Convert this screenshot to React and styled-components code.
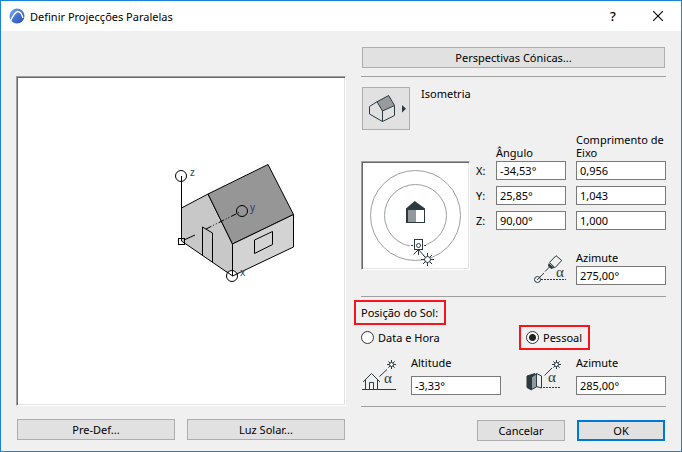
import React, { useState } from "react";
import styled, { createGlobalStyle, css } from "styled-components";

const ink = "#2b3940";

const GlobalStyle = createGlobalStyle`
  *, *::before, *::after { box-sizing: border-box; }
  body { margin: 0; background: #f0f0f0; }
  body, button, input {
    font-family: "Noto Sans", "Open Sans", sans-serif;
    font-size: 11px;
    line-height: 13px;
    color: #000;
  }
`;

const Dialog = styled.main`
  display: flex;
  flex-direction: column;
  min-height: 100vh;
  border: 1px solid #1883d7;
  background: #f0f0f0;
`;

const TitleBar = styled.header`
  display: flex;
  align-items: center;
  gap: 5px;
  height: 30px;
  padding: 0 15px 0 8px;
  background: #fff;
`;

const Title = styled.h1`
  flex: 1;
  margin: 0;
  font-size: 11px;
  font-weight: 400;
`;

const TitleButton = styled.button`
  display: grid;
  place-items: center;
  width: 16px;
  height: 20px;
  margin-left: 24px;
  padding: 0;
  border: 0;
  background: none;
  font-size: 13px;
  font-weight: 500;
`;

const Content = styled.div`
  flex: 1;
  display: grid;
  grid-template-columns: minmax(0, 330fr) minmax(305px, 305fr);
  column-gap: 15px;
  padding: 0 15px;
`;

const PreviewColumn = styled.section`
  display: flex;
  flex-direction: column;
  gap: 13px;
  padding: 45px 0 11px;
`;

const sunken = css`
  border: 1px solid;
  border-color: #a0a0a0 #fff #fff #a0a0a0;
  background: #fff;
  box-shadow: inset 1px 1px 0 #696969, inset -1px -1px 0 #e3e3e3;
  padding: 1px;
`;

const Preview = styled.div`
  ${sunken}
  flex: 1;
  display: grid;
  svg { width: 100%; height: 100%; }
`;

const PreviewActions = styled.div`
  display: grid;
  grid-template-columns: 1fr 1fr;
  gap: 12px;
  padding: 0 1px;
`;

const Button = styled.button`
  height: 21px;
  padding: 0 8px;
  border: ${(p) => (p.$primary ? "2px solid #0078d7" : "1px solid #adadad")};
  border-radius: 0;
  background: #e1e1e1;
`;

const Settings = styled.section`
  display: flex;
  flex-direction: column;
  padding: 16px 0 10px;
`;

const Rule = styled.hr`
  width: 100%;
  height: 1px;
  margin: 0;
  border: 0;
  background: #a0a0a0;
`;

const WideButton = styled(Button)`
  margin: 0 1px 8px;
`;

const ProjectionRow = styled.div`
  display: flex;
  gap: 11px;
  margin: 10px 0 3px 1px;
`;

const ProjectionButton = styled.button`
  display: grid;
  place-items: center;
  width: 48px;
  height: 43px;
  padding: 0;
  border: 1px solid #adadad;
  background: #e1e1e1;
`;

const Parameters = styled.div`
  display: flex;
  align-items: flex-start;
  gap: 6px;
`;

const Orbit = styled.div`
  ${sunken}
  display: grid;
  width: 109px;
  height: 109px;
  margin-top: 28px;
`;

const ParameterFields = styled.div`
  flex: 1;
  display: flex;
  flex-direction: column;
  gap: 21px;
  margin-bottom: 11px;
`;

const AxisTable = styled.div`
  display: grid;
  grid-template-columns: 10px minmax(0, 7fr) minmax(0, 9fr);
  gap: 6px 10px;
  align-items: center;
`;

const ColumnLabel = styled.span`
  align-self: end;
  margin-bottom: -4px;
`;

const TextBox = styled.input`
  width: 100%;
  min-width: 0;
  height: 19px;
  padding: 0 3px;
  border: 1px solid #7a7a7a;
  border-radius: 0;
  background: #fff;
`;

const IconField = styled.div`
  display: flex;
  align-items: flex-end;
  justify-content: ${(p) => (p.$end ? "flex-end" : "flex-start")};
  gap: ${(p) => (p.$tight ? "9px" : "15px")};
`;

const Field = styled.label`
  display: flex;
  flex-direction: column;
  gap: ${(p) => (p.$roomy ? "7px" : "2px")};
  width: 90px;
`;

const SunGrid = styled.div`
  display: grid;
  grid-template-columns: 165fr 140fr;
`;

const SunHeading = styled.h2`
  align-self: flex-start;
  margin: 9px 0 12px;
  font-size: 11px;
  font-weight: 400;
`;

/* Red frame laid over a label without taking room in the flow. */
const Highlight = styled.span`
  position: relative;
  display: inline-flex;
  &::after {
    content: "";
    position: absolute;
    inset: -6px -8px -6px -7px;
    border: 2px solid #f8141c;
    pointer-events: none;
  }
`;

const Option = styled.label`
  display: inline-flex;
  align-items: center;
  gap: 4px;
`;

const Radio = styled.input`
  appearance: none;
  width: 13px;
  height: 13px;
  margin: 0;
  border: 1px solid #333;
  border-radius: 50%;
  background: #fff;
  &:checked { background: radial-gradient(circle, #222 0 3px, #fff 4px); }
`;

const SunFields = styled(SunGrid)`
  margin: 10px 0 11px;
`;

const Footer = styled.footer`
  display: flex;
  justify-content: flex-end;
  gap: 12px;
  margin: auto 0 0;
  padding: 13px 1px 0 0;
`;

const FooterButton = styled(Button)`
  width: 88px;
`;

const Icon = styled.svg`
  display: block;
  flex: none;
  fill: none;
  stroke: ${ink};
  stroke-width: 1;
  text {
    fill: ${ink};
    stroke: none;
    font: 15px "Liberation Serif", serif;
  }
`;

function Sun({ x, y, r, reach }) {
  const d = reach * 0.7;
  const e = r * 0.7;
  return (
    <g>
      <circle cx={x} cy={y} r={r} fill="#fff" />
      <path
        d={`M${x - reach} ${y}H${x - r}M${x + r} ${y}H${x + reach}M${x} ${y - reach}V${y - r}M${x} ${y + r}V${y + reach}
        M${x - d} ${y - d}L${x - e} ${y - e}M${x + d} ${y - d}L${x + e} ${y - e}M${x - d} ${y + d}L${x - e} ${y + e}M${x + d} ${y + d}L${x + e} ${y + e}`}
      />
    </g>
  );
}

function AppLogo() {
  return (
    <svg width="16" height="16" viewBox="0 0 16 16" aria-hidden="true">
      <defs>
        <linearGradient id="logo" x1="0" y1="0" x2="1" y2="1">
          <stop offset="0" stopColor="#7fb0f0" />
          <stop offset="0.5" stopColor="#4474d4" />
          <stop offset="1" stopColor="#2a4fa8" />
        </linearGradient>
      </defs>
      <circle cx="8" cy="8" r="7.500" fill="url(#logo)" />
      <path d="M1.500 13C3.500 8.500 6 4 9 3.500C11.500 3.500 13 6.500 14 10" fill="none" stroke="#fff" strokeWidth="1.300" />
    </svg>
  );
}

function HousePreview() {
  return (
    <svg viewBox="18 78 326 326" fill="none" stroke="#000" strokeWidth="1" role="img" aria-label="Isometria">
      <path d="M181.500 208L208 194L232.500 244V276L181.500 241Z" fill="#c8c8c8" />
      <path d="M208 194L268 164.500L293.500 214.500L232.500 244Z" fill="#969696" />
      <path d="M232.500 244L293.500 214.500V247L232.500 276Z" fill="#d3d3d3" />
      <path d="M202.500 255.500V227L212.500 233V262.500" />
      <path d="M254.500 240L272.500 231.500V244.500L254.500 253.500Z" />
      <path d="M184 240L195 235" />
      <path d="M206 229L240 212" strokeDasharray="6 2 1 2 1 2" />
      <circle cx="242" cy="211" r="5.500" />
      <path d="M181.500 181V238" />
      <circle cx="181" cy="176" r="5.500" fill="#fff" />
      <path d="M181.500 176V181" />
      <rect x="178.500" y="238.500" width="6" height="6" />
      <circle cx="232" cy="276" r="5.500" fill="#fff" />
      <path d="M226.500 271.500L232.500 276L238 273.500M232.500 270V276" />
      <g fill="#28406c" stroke="none" fontSize="10">
        <text x="190" y="176">z</text>
        <text x="250" y="211">y</text>
        <text x="240" y="276">x</text>
      </g>
    </svg>
  );
}

function OrbitDiagram() {
  return (
    <Icon viewBox="363 163 105 105" width="105" height="105" aria-hidden="true">
      <g stroke="#9a9fa1">
        <circle cx="415.500" cy="215.500" r="45" />
        <circle cx="415.500" cy="215.500" r="31" />
      </g>
      <path d="M406 223V208.500L414.700 201L425 208.500V223Z" fill={ink} stroke="none" />
      <path d="M408 210H416V222H408Z" fill="#92989b" stroke="none" />
      <path d="M416 210H424V222H416Z" fill="#fff" stroke="none" />
      <path d="M410 243H426V250H410Z" fill="#fff" stroke="none" />
      <path d="M411 245.500H413M424 245.500H426" />
      <rect x="414.500" y="239.500" width="8" height="10" fill="#fff" />
      <circle cx="418.500" cy="245.500" r="2" />
      <path d="M418.500 250V255M418 250L413.500 254.500M419 250L425 257" />
      <Sun x={427.5} y={259.5} r={3} reach={6.5} />
    </Icon>
  );
}

function ProjectionIcon() {
  return (
    <Icon viewBox="363 88 46 41" width="46" height="41" aria-hidden="true">
      <path d="M377 101.700L369.500 106.500V114L382.500 121.500L394.500 115.500V105.500M382.500 111V121.500" />
      <path d="M377 101.700L388.700 95.500L394.500 105.500L382.500 111Z" fill="#969b9e" />
      <path d="M402 105V112.500L406 108.700Z" fill={ink} stroke="none" />
    </Icon>
  );
}

function CameraAngleIcon() {
  return (
    <Icon viewBox="532 253 35 32" width="35" height="32" aria-hidden="true">
      <circle cx="537.500" cy="279.500" r="3" />
      <path d="M537 280L544 273M545 271.500L549.500 267" />
      <path d="M556 255.700L561.700 260.500L555 267.700L549.500 262.500Z" />
      <path d="M549 263.500L548.500 266L551 268.500L554 267.500" fill={ink} />
      <path d="M541 279.500H566" strokeDasharray="2 1" />
      <text x="556" y="277">α</text>
    </Icon>
  );
}

function AltitudeIcon() {
  return (
    <Icon viewBox="361 358 35 37" width="35" height="37" aria-hidden="true">
      <path d="M362 389.500H396M363 382L371.500 373.500L380 382M365.500 380V389M377.500 380V389M369.500 389V382.500H373.500V389" />
      <path d="M379.500 376.500L387 369.500" />
      <Sun x={391.5} y={364.5} r={2} reach={4.5} />
      <text x="384" y="383">α</text>
    </Icon>
  );
}

function SunAzimuthIcon() {
  return (
    <Icon viewBox="526 358 35 37" width="35" height="37" aria-hidden="true">
      <path d="M527 376L535 373.500L531.500 378V390L527 387.500Z" fill={ink} />
      <path d="M531.500 377L536.500 374V387L531.500 389.500Z" fill="#92989b" />
      <path d="M536.500 373.500L541.500 376V388L536.500 386.500Z" fill="#f0f0f0" />
      <path d="M543 387.500H560" strokeDasharray="2 1" />
      <path d="M544.500 375.500L552 368" />
      <Sun x={556.5} y={364.5} r={2} reach={4.5} />
      <text x="548" y="382">α</text>
    </Icon>
  );
}

const axes = [
  { name: "X", angle: "-34,53°", length: "0,956" },
  { name: "Y", angle: "25,85°", length: "1,043" },
  { name: "Z", angle: "90,00°", length: "1,000" },
];

function LabelledBox({ label, value, roomy }) {
  return (
    <Field $roomy={roomy}>
      {label}
      <TextBox defaultValue={value} />
    </Field>
  );
}

export default function App() {
  const [mode, setMode] = useState("pessoal");

  return (
    <>
      <GlobalStyle />
      <Dialog>
        <TitleBar>
          <AppLogo />
          <Title>Definir Projecções Paralelas</Title>
          <TitleButton type="button" aria-label="Ajuda">?</TitleButton>
          <TitleButton type="button" aria-label="Fechar">
            <svg width="10" height="10" viewBox="0 0 10 10" stroke="#000" strokeWidth="1.100">
              <path d="M0 0L10 10M10 0L0 10" />
            </svg>
          </TitleButton>
        </TitleBar>
        <Content>
          <PreviewColumn>
            <Preview>
              <HousePreview />
            </Preview>
            <PreviewActions>
              <Button type="button">Pre-Def...</Button>
              <Button type="button">Luz Solar...</Button>
            </PreviewActions>
          </PreviewColumn>
          <Settings>
            <WideButton type="button">Perspectivas Cónicas...</WideButton>
            <Rule />
            <ProjectionRow>
              <ProjectionButton type="button" aria-label="Tipo de projecção">
                <ProjectionIcon />
              </ProjectionButton>
              <span>Isometria</span>
            </ProjectionRow>
            <Parameters>
              <Orbit>
                <OrbitDiagram />
              </Orbit>
              <ParameterFields>
                <AxisTable>
                  <span />
                  <ColumnLabel>Ângulo</ColumnLabel>
                  <ColumnLabel>Comprimento de Eixo</ColumnLabel>
                  {axes.map((axis) => (
                    <React.Fragment key={axis.name}>
                      <label htmlFor={`angle-${axis.name}`}>{axis.name}:</label>
                      <TextBox id={`angle-${axis.name}`} defaultValue={axis.angle} />
                      <TextBox aria-label={`Comprimento de Eixo ${axis.name}`} defaultValue={axis.length} />
                    </React.Fragment>
                  ))}
                </AxisTable>
                <IconField $end $tight>
                  <CameraAngleIcon />
                  <LabelledBox label="Azimute" value="275,00°" />
                </IconField>
              </ParameterFields>
            </Parameters>
            <Rule />
            <SunHeading>
              <Highlight>Posição do Sol:</Highlight>
            </SunHeading>
            <SunGrid>
              <div>
                <Option>
                  <Radio type="radio" name="sun" checked={mode === "data"} onChange={() => setMode("data")} />
                  Data e Hora
                </Option>
              </div>
              <div>
                <Highlight>
                  <Option>
                    <Radio type="radio" name="sun" checked={mode === "pessoal"} onChange={() => setMode("pessoal")} />
                    Pessoal
                  </Option>
                </Highlight>
              </div>
            </SunGrid>
            <SunFields>
              <IconField>
                <AltitudeIcon />
                <LabelledBox roomy label="Altitude" value="-3,33°" />
              </IconField>
              <IconField $end>
                <SunAzimuthIcon />
                <LabelledBox roomy label="Azimute" value="285,00°" />
              </IconField>
            </SunFields>
            <Rule />
            <Footer>
              <FooterButton type="button">Cancelar</FooterButton>
              <FooterButton type="submit" $primary>OK</FooterButton>
            </Footer>
          </Settings>
        </Content>
      </Dialog>
    </>
  );
}
